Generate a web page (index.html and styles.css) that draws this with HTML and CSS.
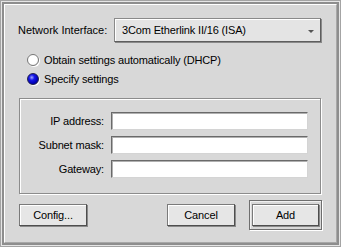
FILE: index.html
```html
<!DOCTYPE html>
<html lang="en">
<head>
    <meta charset="UTF-8">
    <title>Network Interface</title>
    <link rel="stylesheet" href="styles.css">
</head>
<body>
    <div class="window">
        <div class="frame">
            <div class="content">
                <div class="iface-row">
                    <span class="iface-label">Network Interface:</span>
                    <div class="select">
                        <span>3Com Etherlink II/16 (ISA)</span>
                        <span class="arrow"></span>
                    </div>
                </div>

                <div class="radios">
                    <div class="radio">
                        <span class="dot"></span>
                        <span>Obtain settings automatically (DHCP)</span>
                    </div>
                    <div class="radio">
                        <span class="dot checked"></span>
                        <span>Specify settings</span>
                    </div>
                </div>

                <div class="group">
                    <span class="field-label">IP address:</span>
                    <div class="input"></div>
                    <span class="field-label">Subnet mask:</span>
                    <div class="input"></div>
                    <span class="field-label">Gateway:</span>
                    <div class="input"></div>
                </div>

                <div class="buttons">
                    <button class="btn">Config...</button>
                    <div class="spacer"></div>
                    <button class="btn">Cancel</button>
                    <div class="default-ring">
                        <button class="btn">Add</button>
                    </div>
                </div>
            </div>
        </div>
    </div>
</body>
</html>
```

FILE: styles.css
```css
:root {
    --bg: #d8d8d8;
    --dark: #8c8c8c;
    --shadow: #5e5e5e;
    --text: #000;
}

html, body {
    margin: 0;
    padding: 0;
}

body {
    font-family: "Liberation Sans", Arial, sans-serif;
    font-size: 11px;
    letter-spacing: -0.15px;
    color: var(--text);
    background: var(--bg);
}

.window {
    width: 341px;
    height: 247px;
    box-sizing: border-box;
    border: 1px solid #a4a4a4;
    padding: 1px;
    background: #e6e6e6;
}

.frame {
    height: 100%;
    box-sizing: border-box;
    border: 2px solid #8e8e8e;
}

.content {
    height: 100%;
    box-sizing: border-box;
    background: var(--bg);
    border-top: 1px solid #fff;
    border-left: 1px solid #fff;
    border-right: 1px solid #a8a8a8;
    border-bottom: 1px solid #a8a8a8;
    padding: 13px 15px 0 13px;
}

/* interface selector */
.iface-row {
    display: flex;
    align-items: center;
    height: 24px;
}

.iface-label {
    width: 96px;
    letter-spacing: 0;
}

.select {
    flex: 1;
    height: 24px;
    box-sizing: border-box;
    display: flex;
    align-items: center;
    justify-content: space-between;
    padding: 0 6px 0 7px;
    background: #e4e4e4;
    border: 1px solid #8a8a8a;
    border-right-color: var(--shadow);
    border-bottom-color: var(--shadow);
    box-shadow: inset 1px 1px 0 #fff, 1px 1px 0 #8a8a8a;
}

.arrow {
    width: 0;
    height: 0;
    margin-top: 3px;
    border-left: 3px solid transparent;
    border-right: 3px solid transparent;
    border-top: 3px solid #555;
}

/* radios */
.radios {
    display: flex;
    flex-direction: column;
    padding: 8px 0 0 9px;
}

.radio {
    display: flex;
    align-items: center;
    gap: 5px;
    height: 19px;
}

.dot {
    width: 12px;
    height: 12px;
    box-sizing: border-box;
    border-radius: 50%;
    border: 1px solid #777;
    background: radial-gradient(circle at 40% 40%, #fff 55%, #e4e4e4 100%);
    box-shadow: 1px 1px 0 #fff;
}

.dot.checked {
    border-color: #202050;
    background: radial-gradient(circle at 38% 35%, #a0a8ff 0, #1818e8 30%, #0000b8 65%, #000070 100%);
}

/* address group */
.group {
    margin-top: 10px;
    margin-left: 1px;
    height: 96px;
    box-sizing: border-box;
    border: 1px solid var(--dark);
    box-shadow: inset 1px 1px 0 #fff, 1px 1px 0 #fff;
    padding: 13px 12px 0 0;
    display: grid;
    grid-template-columns: 84px 1fr;
    grid-auto-rows: 18px;
    column-gap: 7px;
    row-gap: 6px;
    align-items: center;
}

.field-label {
    text-align: right;
}

.input {
    height: 18px;
    box-sizing: border-box;
    background: #fff;
    border: 1px solid #d4d4d4;
    border-top-color: #6a6a6a;
    border-left-color: #6a6a6a;
    box-shadow: inset 1px 1px 0 #b0b0b0;
}

/* buttons */
.buttons {
    display: flex;
    align-items: center;
    margin-top: 6px;
    margin-left: 1px;
    height: 30px;
}

.spacer {
    flex: 1;
}

.btn {
    width: 68px;
    height: 22px;
    box-sizing: border-box;
    font-family: inherit;
    font-size: 11px;
    letter-spacing: inherit;
    color: var(--text);
    background: #e6e6e6;
    border: 1px solid #7a7a7a;
    border-right-color: #4e4e4e;
    border-bottom-color: #4e4e4e;
    box-shadow: inset 1px 1px 0 #fff, 1px 1px 0 #8a8a8a;
    padding: 0;
}

.default-ring {
    margin-left: 14px;
    margin-right: -1px;
    width: 73px;
    height: 30px;
    box-sizing: border-box;
    border: 1px solid #6e6e6e;
    box-shadow: inset 1px 1px 0 #f0f0f0, 1px 1px 0 #fff;
    display: flex;
    align-items: center;
    justify-content: center;
}

.default-ring .btn {
    width: 67px;
}
```
